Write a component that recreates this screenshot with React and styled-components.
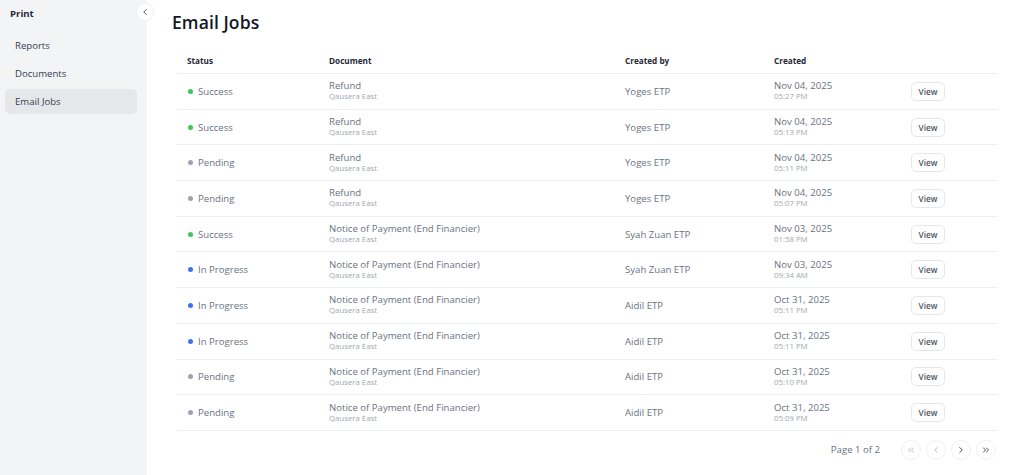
import React from "react";
import styled, { createGlobalStyle } from "styled-components";

const Global = createGlobalStyle`
  html, body { margin: 0; padding: 0; background: #fff; }
  body { font-family: "Open Sans", "Noto Sans", sans-serif; -webkit-font-smoothing: antialiased; }
  * { box-sizing: border-box; }
`;

const Shell = styled.div`
  display: flex;
  height: 475px;
  overflow: hidden;
`;

const Sidebar = styled.aside`
  position: relative;
  width: 147px;
  flex: 0 0 147px;
  background: #f3f4f6;
  padding: 7px 10px 0 5px;
`;

const SideTitle = styled.div`
  font-size: 9.6px;
  font-weight: 700;
  color: #1f2937;
  line-height: 14px;
  padding-left: 5px;
  margin-bottom: 11.5px;
`;

const NavList = styled.nav`
  display: flex;
  flex-direction: column;
  gap: 3px;
`;

const NavItem = styled.div`
  height: 25px;
  display: flex;
  align-items: center;
  padding-left: 10px;
  border-radius: 5px;
  font-size: 9.6px;
  color: #374151;
  background: ${(p) => (p.$active ? "#e6e7ea" : "transparent")};
`;

const Collapse = styled.button`
  position: absolute;
  top: 3px;
  right: -7px;
  width: 18px;
  height: 18px;
  border-radius: 50%;
  background: #fff;
  border: 1px solid #eef0f2;
  display: flex;
  align-items: center;
  justify-content: center;
  padding: 0;
  color: #4b5563;
  z-index: 2;
`;

const Main = styled.main`
  flex: 1;
  padding: 11px 26px 0 25px;
  display: flex;
  flex-direction: column;
`;

const Title = styled.h1`
  margin: 0;
  font-family: "Open Sans", sans-serif;
  font-size: 17.5px;
  font-weight: 600;
  line-height: 22px;
  color: #111827;
  letter-spacing: 0.1px;
`;

const Table = styled.div`
  margin: 14px 0 0 5px;
`;

const Row = styled.div`
  display: grid;
  grid-template-columns: 142px 296px 149px 137px 1fr;
  align-items: center;
  padding-left: 10px;
  height: ${(p) => (p.$head ? "27px" : "35.7px")};
  border-bottom: 1px solid #eceef0;
`;

const HeadCell = styled.div`
  font-size: 8.2px;
  font-weight: 700;
  color: #1f2937;
`;

const StatusCell = styled.div`
  display: flex;
  align-items: center;
  gap: 5px;
  font-size: 9.6px;
  color: #6b7280;
  padding-left: 1px;
`;

const Dot = styled.span`
  width: 5px;
  height: 5px;
  border-radius: 50%;
  background: ${(p) => p.$color};
`;

const Stack = styled.div`
  display: flex;
  flex-direction: column;
  line-height: 11px;
`;

const Primary = styled.span`
  font-size: 9.6px;
  color: #6b7280;
`;

const Secondary = styled.span`
  font-size: 7.8px;
  color: #a3a8b0;
`;

const ActionCell = styled.div`
  display: flex;
  align-items: center;
`;

const ViewBtn = styled.button`
  width: 34px;
  height: 19px;
  border: 1px solid #e5e7eb;
  border-radius: 5px;
  background: #fff;
  font-family: inherit;
  font-size: 8.2px;
  font-weight: 600;
  color: #4b5563;
  padding: 0;
`;

const Pager = styled.div`
  display: flex;
  align-items: center;
  justify-content: flex-end;
  margin-top: 9px;
  padding-right: 2px;
`;

const PageText = styled.span`
  font-size: 9.6px;
  color: #6b7280;
  margin-right: 21px;
`;

const PageBtns = styled.div`
  display: flex;
  gap: 5px;
`;

const PageBtn = styled.button`
  width: 20px;
  height: 20px;
  border-radius: 50%;
  border: 1px solid #eef0f2;
  background: #fff;
  padding: 0;
  display: flex;
  align-items: center;
  justify-content: center;
  color: ${(p) => (p.$disabled ? "#b8bcc4" : "#4b5563")};
`;

const colors = {
  Success: "#3cc756",
  Pending: "#9ca3af",
  "In Progress": "#3b74f0",
};

const rows = [
  ["Success", "Refund", "Yoges ETP", "Nov 04, 2025", "05:27 PM"],
  ["Success", "Refund", "Yoges ETP", "Nov 04, 2025", "05:13 PM"],
  ["Pending", "Refund", "Yoges ETP", "Nov 04, 2025", "05:11 PM"],
  ["Pending", "Refund", "Yoges ETP", "Nov 04, 2025", "05:07 PM"],
  ["Success", "Notice of Payment (End Financier)", "Syah Zuan ETP", "Nov 03, 2025", "01:58 PM"],
  ["In Progress", "Notice of Payment (End Financier)", "Syah Zuan ETP", "Nov 03, 2025", "09:34 AM"],
  ["In Progress", "Notice of Payment (End Financier)", "Aidil ETP", "Oct 31, 2025", "05:11 PM"],
  ["In Progress", "Notice of Payment (End Financier)", "Aidil ETP", "Oct 31, 2025", "05:11 PM"],
  ["Pending", "Notice of Payment (End Financier)", "Aidil ETP", "Oct 31, 2025", "05:10 PM"],
  ["Pending", "Notice of Payment (End Financier)", "Aidil ETP", "Oct 31, 2025", "05:09 PM"],
];

const Chev = ({ d }) => (
  <svg width="10" height="10" viewBox="0 0 24 24" fill="none" stroke="currentColor" strokeWidth="2.4" strokeLinecap="round" strokeLinejoin="round">
    <path d={d} />
  </svg>
);

export default function App() {
  return (
    <>
      <Global />
      <Shell>
        <Sidebar>
          <SideTitle>Print</SideTitle>
          <NavList>
            <NavItem>Reports</NavItem>
            <NavItem>Documents</NavItem>
            <NavItem $active>Email Jobs</NavItem>
          </NavList>
          <Collapse aria-label="Collapse">
            <Chev d="M15 6l-6 6 6 6" />
          </Collapse>
        </Sidebar>
        <Main>
          <Title>Email Jobs</Title>
          <Table>
            <Row $head>
              <HeadCell>Status</HeadCell>
              <HeadCell>Document</HeadCell>
              <HeadCell>Created by</HeadCell>
              <HeadCell>Created</HeadCell>
              <HeadCell />
            </Row>
            {rows.map((r, i) => (
              <Row key={i}>
                <StatusCell>
                  <Dot $color={colors[r[0]]} />
                  {r[0]}
                </StatusCell>
                <Stack>
                  <Primary>{r[1]}</Primary>
                  <Secondary>Qausera East</Secondary>
                </Stack>
                <Primary>{r[2]}</Primary>
                <Stack>
                  <Primary>{r[3]}</Primary>
                  <Secondary>{r[4]}</Secondary>
                </Stack>
                <ActionCell>
                  <ViewBtn>View</ViewBtn>
                </ActionCell>
              </Row>
            ))}
          </Table>
          <Pager>
            <PageText>Page 1 of 2</PageText>
            <PageBtns>
              <PageBtn $disabled><Chev d="M11 17l-5-5 5-5M18 17l-5-5 5-5" /></PageBtn>
              <PageBtn $disabled><Chev d="M15 18l-6-6 6-6" /></PageBtn>
              <PageBtn><Chev d="M9 18l6-6-6-6" /></PageBtn>
              <PageBtn><Chev d="M13 17l5-5-5-5M6 17l5-5-5-5" /></PageBtn>
            </PageBtns>
          </Pager>
        </Main>
      </Shell>
    </>
  );
}
